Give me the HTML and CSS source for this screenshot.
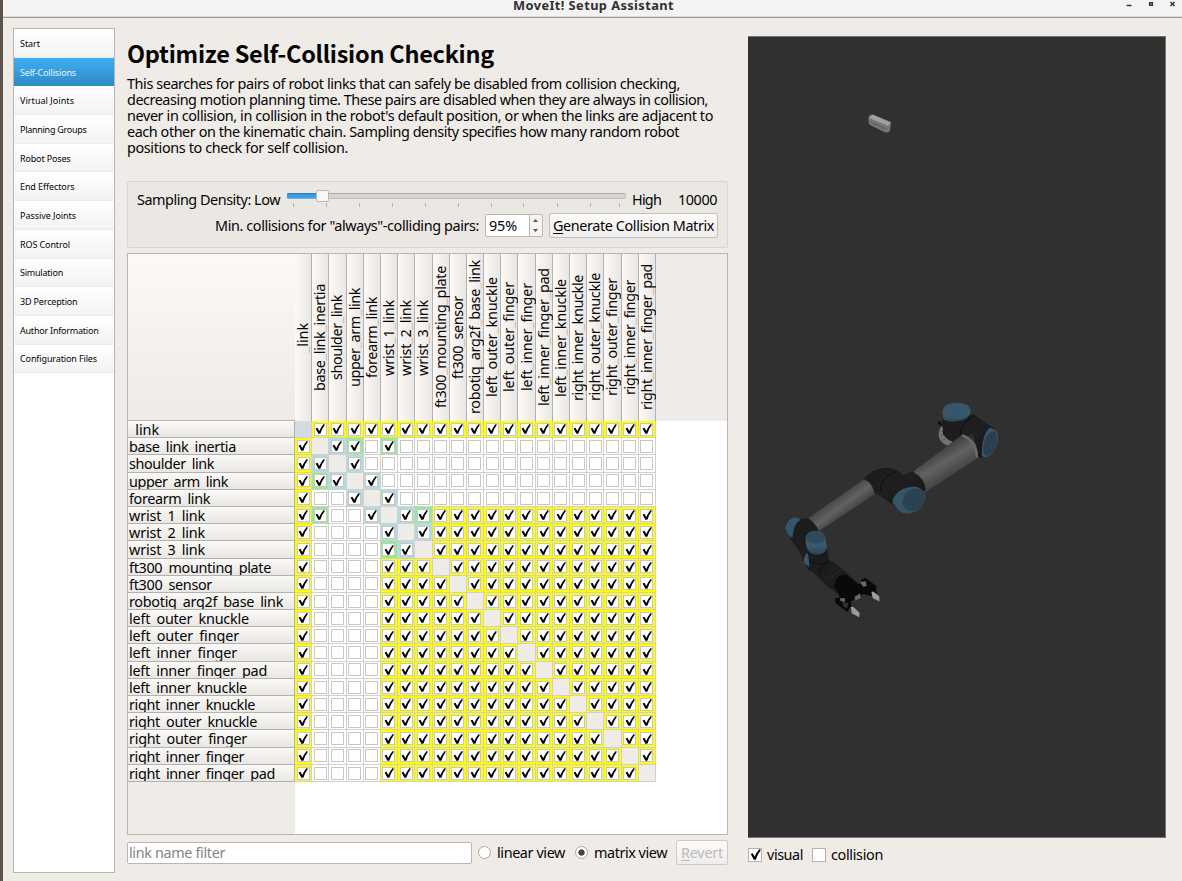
FILE: index.html
```html
<!DOCTYPE html>
<html lang="en">
<head>
<meta charset="utf-8">
<title>MoveIt! Setup Assistant</title>
<link rel="stylesheet" href="styles.css">
</head>
<body>
<svg class="defs" width="0" height="0"><defs><symbol id="check" viewBox="0 0 12 12"><path d="M1.6 5.6 3.5 4.8 5.2 8 Q6.8 4.2 9.7 1 L10.9 1.8 Q7.9 5.8 6.3 10.8 L4.4 10.8Z"/></symbol></defs></svg>
<div class="window">
  <header class="titlebar">
    <span class="title fit" data-w="161">MoveIt! Setup Assistant</span>
    <svg class="controls" width="60" height="16" viewBox="1122 0 60 16"><path d="M1126.5 5.5h5" stroke="#3a3a3a" stroke-width="1.5"/><path d="M1149.7 2.7h2.6v2.6h-2.6z" fill="none" stroke="#34393b" stroke-width="1.6"/><path d="M1170.5 2l4 4m0-4l-4 4" stroke="#34393b" stroke-width="1.6"/></svg>
  </header>
  <div class="body">
    <nav class="sidebar">
      <div class="item"><span class="fit" data-w="20">Start</span></div>
      <div class="item active"><span class="fit" data-w="56">Self-Collisions</span></div>
      <div class="item"><span class="fit" data-w="54">Virtual Joints</span></div>
      <div class="item"><span class="fit" data-w="66.5">Planning Groups</span></div>
      <div class="item"><span class="fit" data-w="50.5">Robot Poses</span></div>
      <div class="item"><span class="fit" data-w="54.5">End Effectors</span></div>
      <div class="item"><span class="fit" data-w="56">Passive Joints</span></div>
      <div class="item"><span class="fit" data-w="50">ROS Control</span></div>
      <div class="item"><span class="fit" data-w="43">Simulation</span></div>
      <div class="item"><span class="fit" data-w="57.5">3D Perception</span></div>
      <div class="item"><span class="fit" data-w="78.5">Author Information</span></div>
      <div class="item"><span class="fit" data-w="77">Configuration Files</span></div>
    </nav>
    <main class="main">
      <h1><span class="fit" data-w="367">Optimize Self-Collision Checking</span></h1>
      <p class="intro">
        <span class="fit" data-w="553">This searches for pairs of robot links that can safely be disabled from collision checking,</span>
        <span class="fit" data-w="581">decreasing motion planning time. These pairs are disabled when they are always in collision,</span>
        <span class="fit" data-w="586">never in collision, in collision in the robot's default position, or when the links are adjacent to</span>
        <span class="fit" data-w="552">each other on the kinematic chain. Sampling density specifies how many random robot</span>
        <span class="fit" data-w="221">positions to check for self collision.</span>
      </p>
      <section class="group">
        <div class="line density">
          <span class="fit" data-w="143">Sampling Density: Low</span>
          <svg class="slider" width="340" height="20" viewBox="287 190 340 20">
            <defs><linearGradient id="bl" x2="0" y2="1"><stop stop-color="#2d78b0"/><stop offset=".35" stop-color="#3c9fe2"/><stop offset="1" stop-color="#3ba2ea"/></linearGradient></defs>
            <rect x="287.5" y="193.5" width="338" height="5" rx="1" fill="#d9d6d2" stroke="#c2bfbb"/>
            <path d="M288 193.5h337" stroke="#aaa7a3"/>
            <rect x="287" y="193" width="32" height="5.5" rx="1" fill="url(#bl)"/>
            <path class="ticks" d="M293.5 203v4M326.5 203v4M359.5 203v4M392.5 203v4M425.5 203v4M458.5 203v4M491.5 203v4M523.5 203v4M557.5 203v4M590.5 203v4M619.5 203v4"/>
            <rect x="316.5" y="190.5" width="12" height="11" rx="1.5" fill="#f9f8f7" stroke="#bbb8b4"/>
          </svg>
          <span class="fit high" data-w="29">High</span>
          <span class="fit" data-w="39">10000</span>
        </div>
        <div class="line collide">
          <span class="fit" data-w="264">Min. collisions for "always"-colliding pairs:</span>
          <div class="spin"><span class="fit" data-w="28">95%</span><svg width="13" height="21" viewBox="0 0 13 21"><path d="M4 7 6.5 4 9 7zM4 14h5L6.500 17z" fill="#555"/></svg></div>
          <button class="btn generate"><span class="fit" data-w="161"><u>G</u>enerate Collision Matrix</span></button>
        </div>
      </section>
      <section class="table">
        <div class="corner"></div>
        <div class="cols" id="cols"></div>
        <div class="rows" id="rows"></div>
        <div class="cells" id="cells"></div>
      </section>
      <div class="footer">
        <div class="filter"><span class="fit" data-w="96">link name filter</span></div>
        <i class="radio"></i><span class="fit linear" data-w="68">linear view</span>
        <i class="radio on"></i><span class="fit matrix" data-w="73">matrix view</span>
        <button class="btn revert"><span class="fit" data-w="42"><u>R</u>evert</span></button>
      </div>
    </main>
    <aside class="viewer">
      <svg class="scene" width="418" height="802" viewBox="748 37 418 802">
        <defs>
          <linearGradient id="tube" gradientUnits="userSpaceOnUse" x1="505" y1="185" x2="550" y2="260"><stop stop-color="#404040"/><stop offset=".45" stop-color="#626262"/><stop offset="1" stop-color="#434343"/></linearGradient>
          <linearGradient id="tube2" gradientUnits="userSpaceOnUse" x1="195" y1="325" x2="235" y2="380"><stop stop-color="#434343"/><stop offset=".5" stop-color="#626262"/><stop offset="1" stop-color="#3e3e3e"/></linearGradient>
          <linearGradient id="joint" x2="1" y2="1"><stop stop-color="#191919"/><stop offset=".5" stop-color="#1f1f1f"/><stop offset="1" stop-color="#131313"/></linearGradient>
          <linearGradient id="cap" x2="0" y2="1"><stop stop-color="#36536a"/><stop offset=".6" stop-color="#3b596d"/><stop offset="1" stop-color="#2a4354"/></linearGradient>
        </defs>
        <path d="M869 117q1-3 5-2l17 7q1 2 0 4l-1 6-4 1-16-8q-2-2-1-8z" fill="#767676"/>
        <path d="M869 118l4-3 18 8-3 3z" fill="#a0a0a0"/><path d="M870 122l17 7M874 125l1 1m6 2l3 1" stroke="#555" stroke-width=".8"/>
        <g transform="translate(770 390) scale(.33333)">
          <path d="M505 95l14 7v12l-14-10z" fill="#111"/>
          <path d="M517 110q-12 14-9 33 5 19 26 27l20-8-26-27z" fill="#747474"/><path d="M512 126l8 2m-7 13l9-3m-3 16l8-5" stroke="#484848" stroke-width="2"/>
          <path d="M519 75l1 60q16 24 43 27l25-18 24-10 13 70 15 2 34-88-60-41z" fill="url(#joint)"/>
          <path d="M432 247 578 137Q616 145 625 185V207L466 310Q448 290 432 247z" fill="url(#tube)"/>
          <path d="M578 139q38 12 45 66" fill="none" stroke="#6b6b6b" stroke-width="7"/>
          <path d="M572 134q5-32 34-51" fill="none" stroke="#0c0c0c" stroke-width="3"/>
          <path d="M519 70q-1-20 24-27 36-7 56 12 7 9 2 21-7 15-35 20-30 6-44-5-3-7-3-21z" fill="url(#cap)"/>
          <ellipse cx="562" cy="63" rx="39" ry="21" fill="#37566b" transform="rotate(-5 562 63)"/><path d="M522 77q20 18 61 5 15-5 20-16" fill="none" stroke="#41627a" stroke-width="2"/>
          <path d="M637 201q0-66 24-85 18 2 25 22 0 27-12 48-14 22-31 18z" fill="#36546a"/><ellipse cx="662" cy="164" rx="18" ry="38" transform="rotate(17 662 164)" fill="#2a4050"/>
          <path d="M281 270q37-39 82-33 24 4 37 22l29-12q40 20 41 55l-21 15-72 36-55-37q-28-12-41-46z" fill="url(#joint)"/>
          <path d="M332 307q0-31 28-50l18-8" fill="none" stroke="#0e0e0e" stroke-width="3"/><path d="M434 249q30 18 37 55" fill="none" stroke="#666" stroke-width="2"/>
          <path d="M368 342q1-25 30-41 30-12 47-6 23 11 23 32-8 39-48 47-17 2-28-5z" fill="#375366"/><ellipse cx="433" cy="333" rx="37" ry="31" fill="#2b4251" transform="rotate(-45 433 333)"/>
          <path d="M112 390 283 271Q309 282 315 316L147 427Q137 400 112 390z" fill="url(#tube2)"/>
          <path d="M69 388l31 2 16-2q23 17 30 39l25 33 3 50-18 28-38 10-20-38-11-24-25-35z" fill="url(#joint)"/>
          <path d="M47 418q5-27 29-33l17 6q-24 17-25 55-17-3-21-28z" fill="#35536a"/><path d="M48 420q6-25 25-32" fill="none" stroke="#3f6077" stroke-width="3"/>
          <path d="M107 457q-1-22 21-29 25-5 38 15l6 31q-2 15-17 22-20 5-34-4-13-12-14-35z" fill="url(#cap)"/><ellipse cx="137" cy="445" rx="29" ry="19" fill="#2e4a5d"/><path d="M108 460q20 27 59 3" fill="none" stroke="#405f74" stroke-width="2"/>
          <path d="M111 492q-14 18-7 33l15 10-3-35z" fill="#35576d"/>
          <path d="M115 494q35 21 61 0v22l15 3 64 55-45 45-38-25-18-19-34-34z" fill="#1c1c1c"/>
          <path d="M118 516q20 16 55 6m-22 33q-2-25 30-39" fill="none" stroke="#0c0c0c" stroke-width="3"/>
          <path d="M174 566q5-20 31-28m-22 36q4-20 34-28" fill="none" stroke="#3e3e3e" stroke-width="2" stroke-dasharray="5 4"/>
          <path d="M193 592q5-36 36-34l28 21 12 8 6-14 12-5 34 25-3 12 5 10-20 7-22-6-22 14-16 9 2 11-12 20-35-26-3-15 16-2-9-20z" fill="#090909"/>
          <path d="M270 580l18-2 3 13-10 4zM254 625l17-11 2 14-16 8zM211 628l15 2-1 10-13-3z" fill="#686868"/>
          <path d="M305 610l6-1 18 15v15l-20-11zM243 655l8 0 19 18-2 13-22-12z" fill="#9b9b9b"/>
          <path d="M218 640l18 4-4 16-12-8z" fill="#303030"/>
        </g>
      </svg>
      <div class="toggles">
        <i class="box"><svg width="13" height="13"><use href="#check"/></svg></i><span class="fit visual" data-w="36">visual</span>
        <i class="box"></i><span class="fit" data-w="52">collision</span>
      </div>
    </aside>
  </div>
</div>
<script src="matrix.js"></script>
</body>
</html>
```
FILE: styles.css
```css
* { box-sizing: border-box; }
body { margin: 0; width: 1182px; height: 881px; overflow: hidden; background: #efebe7; color: #050505; font: 14.4px/16px "Noto Sans", sans-serif; }
.defs { display: block; }
.window { height: 881px; border-left: 3px solid #5d534b; }
.titlebar { display: flex; justify-content: flex-end; height: 18px; background: #f4f3f3; border-bottom: 1px solid #999693; box-shadow: inset 0 -1px #dddbd9; }
.title { font-weight: 700; font-size: 12.8px; line-height: 10px; color: #303030; margin-right: 448px; }
.controls { display: block; }
.fit { display: inline-block; white-space: nowrap; }
.body { display: flex; height: 863px; }
.sidebar { width: 102px; height: 845px; margin: 10px 12px 0 10px; background: #fff; border: 1px solid #b9b5b1; font-size: 9px; }
.item { height: 28.7px; padding: 2px 0 0 6px; display: flex; align-items: center; background: linear-gradient(#fff, #f3f3f3); border-bottom: 1px solid #ebebeb; }
.item.active { color: #e7f5ff; background: linear-gradient(#3daef5, #308cc6); border-color: #308cc6; }
.main { width: 601px; }
h1 { margin: 18px 0 0; height: 36px; font: 700 23.5px/34px "Noto Sans CJK SC", "Noto Sans", sans-serif; }
.intro { margin: 4px 0 0; height: 80px; display: flex; flex-direction: column; align-items: flex-start; }
.group { margin-top: 25px; height: 67px; border: 1px solid #d9d5d1; background: #ebe7e3; border-radius: 2px; padding: 8px 9px 0; }
.line { display: flex; align-items: center; }
.density { height: 20px; }
.slider { margin: 0 5px 0 7px; }
.ticks { stroke: #b7b4b0; }
.high { width: 29px; margin-right: 17px; }
.collide { height: 25px; margin-top: 3px; justify-content: flex-end; }
.spin { width: 58px; height: 23px; margin: 0 6px; border: 1px solid #bbb7b3; border-radius: 2px; background: linear-gradient(90deg, #fff 43px, #bbb7b3 43px, #bbb7b3 44px, #f7f5f4 44px); display: flex; justify-content: space-between; align-items: center; padding-left: 3px; }
.btn { font: inherit; color: inherit; height: 25px; padding: 0; border: 1px solid #c3bfbb; border-radius: 2px; background: linear-gradient(#fcfbfb, #efedeb); text-align: center; }
.generate { width: 169px; }
u { text-underline-offset: 2px; }
.table { margin-top: 5px; height: 582px; border: 1px solid #b9b5b1; background: #fff; display: grid; grid-template: 167px 413px / 167px 432px; overflow: hidden; }
.corner { background: linear-gradient(#fcf9f6, #edeae7); border-bottom: 1px solid #b9b5b1; }
.cols { display: flex; background: #efebe7; }
.col { width: 17.2px; height: 167px; flex: none; border-right: 1px solid #b5b1ad; background: linear-gradient(90deg, #fcf9f6, #e9e7e4); display: flex; align-items: center; justify-content: center; }
.col span { writing-mode: vertical-rl; transform: rotate(180deg); line-height: 16px; white-space: nowrap; }
.col i { font-style: normal; color: #dfb98d; }
.rows { background: #efebe7; }
.row { height: 17.2px; border-bottom: 1px solid #b5b1ad; border-right: 1px solid #b5b1ad; background: linear-gradient(#fbf9f6, #e9e7e4); padding-left: 1px; overflow: hidden; line-height: 17px; }
.row i { font-style: normal; color: transparent; }
.row .fit { vertical-align: top; }
.cells { display: grid; grid-template-columns: repeat(21, 17.2px); grid-auto-rows: 17.2px; align-content: start; }
.cell { border: solid #d2cfcc; border-width: 0 1px 1px 0; padding: 1.8px 0 0 1.5px; }
.cell b { display: block; width: 13px; height: 13px; background: #fff; border: 1px solid #c9c7c5; }
.cell svg { display: block; width: 12px; height: 12px; margin: -.5px; overflow: visible; }
.Y { background: #ff0; }
.B { background: #b0dde5; }
.G { background: #90ee90; }
.D { background: #efebe7; }
.S { background: #d4dce2; }
.footer { display: flex; align-items: center; height: 25px; margin-top: 5px; }
.filter { width: 345px; height: 22px; border: 1px solid #b9b5b1; border-radius: 2px; background: #fff; color: #858585; padding: 2px 1px; line-height: 16px; margin-right: 6px; }
.radio { width: 13px; height: 13px; border: 1px solid #aaa7a3; border-radius: 50%; background: #fff; }
.radio.on { background: radial-gradient(#444 0 2.8px, #fff 3.5px); }
.linear { margin: 0 10px 0 6px; width: 68px; }
.matrix { margin: 0 9px 0 6px; }
.revert { width: 52px; color: #bdbab7; border-color: #cfcbc7; }
.viewer { width: 418px; margin: 18px 0 0 20px; }
.scene { display: block; background: #303030; border: 1px solid #767371; border-left: 0; }
.toggles { display: flex; align-items: center; height: 25px; margin-top: 4px; }
.box { width: 14px; height: 14px; background: #fff; border: 1px solid #b5b1ad; margin-right: 5px; }
.box svg { display: block; margin: -.5px; }
.visual { margin-right: 9px; }
```
FILE: matrix.js
```js
const links = [
  ['_link', 30], ['base_link_inertia', 107], ['shoulder_link', 85], ['upper_arm_link', 99],
  ['forearm_link', 81], ['wrist_1_link', 76], ['wrist_2_link', 76], ['wrist_3_link', 76],
  ['ft300_mounting_plate', 142], ['ft300_sensor', 83], ['robotiq_arg2f_base_link', 154],
  ['left_outer_knuckle', 120], ['left_outer_finger', 110], ['left_inner_finger', 108],
  ['left_inner_finger_pad', 138], ['left_inner_knuckle', 118], ['right_inner_knuckle', 126],
  ['right_outer_knuckle', 128], ['right_outer_finger', 118], ['right_inner_finger', 115],
  ['right_inner_finger_pad', 146]
];
// Y: never in collision, B: adjacent, G: always/default, E: enabled
const adjacency = { '1,2': 'B', '1,3': 'G', '1,5': 'G', '2,3': 'B', '3,4': 'B', '4,5': 'B', '5,6': 'B', '5,7': 'G', '6,7': 'B' };
function state(r, c) {
  if (r === c) return r ? 'D' : 'S';
  const a = Math.min(r, c), b = Math.max(r, c);
  if (a === 0) return 'Y';
  return adjacency[a + ',' + b] || (a < 5 ? 'E' : 'Y');
}
const marked = name => name.replace(/_/g, '<i>_</i>');
cols.innerHTML = links.map(([n, w]) => `<div class="col"><span class="vfit" data-w="${w}">${marked(n)}</span></div>`).join('');
rows.innerHTML = links.map(([n, w]) => `<div class="row"><span class="fit" data-w="${w}">${marked(n)}</span></div>`).join('');
cells.innerHTML = links.map((_, r) => links.map((_, c) => {
  const s = state(r, c);
  if (s === 'D' || s === 'S') return `<div class="cell ${s}"></div>`;
  return `<div class="cell ${s}"><b>${s === 'E' ? '' : '<svg><use href="#check"/></svg>'}</b></div>`;
}).join('')).join('');
// Spread letters so each label takes its nominal width.
document.querySelectorAll('.fit, .vfit').forEach(el => {
  el.style.width = 'auto';
  const box = el.getBoundingClientRect();
  const size = el.classList.contains('vfit') ? box.height : box.width;
  el.style.letterSpacing = (el.dataset.w - size) / el.textContent.length + 'px';
});
```
